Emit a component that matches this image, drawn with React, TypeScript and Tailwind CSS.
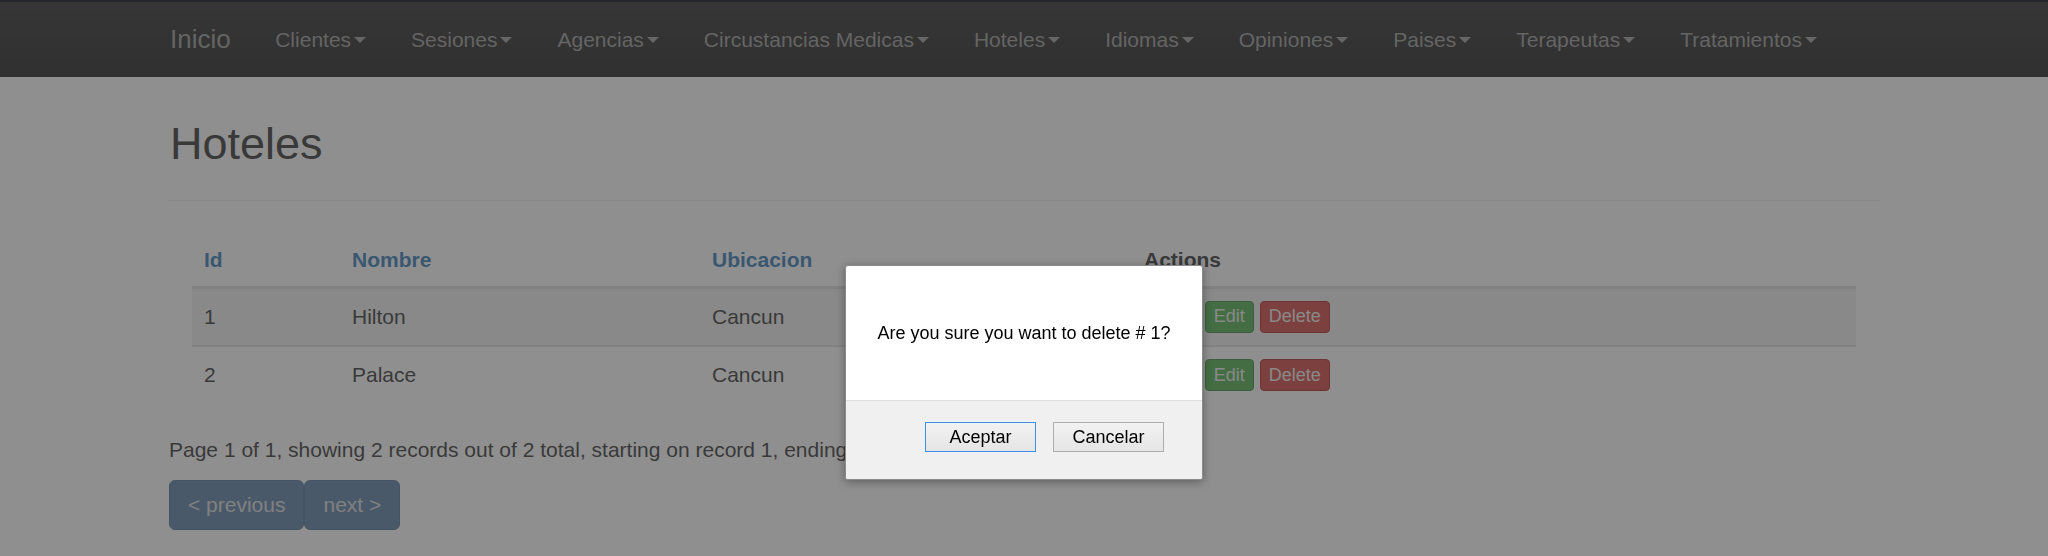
import React from 'react';

type Hotel = {
  id: number;
  nombre: string;
  ubicacion: string;
};

const menus = [
  'Clientes',
  'Sesiones',
  'Agencias',
  'Circustancias Medicas',
  'Hoteles',
  'Idiomas',
  'Opiniones',
  'Paises',
  'Terapeutas',
  'Tratamientos',
];

const hoteles: Hotel[] = [
  { id: 1, nombre: 'Hilton', ubicacion: 'Cancun' },
  { id: 2, nombre: 'Palace', ubicacion: 'Cancun' },
];

const Caret = () => (
  <span className="ml-[3px] inline-block h-0 w-0 border-x-[6px] border-t-[6px] border-x-transparent border-t-[#9d9d9d] align-middle" />
);

const Navbar = () => (
  <div className="h-[77px] border-t-2 border-[#050810] bg-gradient-to-b from-[#2c2c2c] to-[#1e1e1e]">
    <div className="mx-auto flex h-full w-[1714px] items-center pl-[3px]">
      <span className="pr-[22px] text-[26px] text-[#9a9a9a]">Inicio</span>
      {menus.map((m) => (
        <span key={m} className="flex items-center px-[22.5px] text-[21px] text-[#9a9a9a]">
          {m}
          <Caret />
        </span>
      ))}
    </div>
  </div>
);

const ConfirmDialog = () => (
  <div className="fixed inset-0 flex items-start justify-center pt-[265px]">
    <div className="flex h-[215px] w-[358px] flex-col overflow-hidden rounded-[3px] border border-[#8a8a8a] bg-white shadow-[0_2px_10px_rgba(0,0,0,0.35)] font-['Liberation_Sans',Arial,sans-serif]">
      <div className="flex h-[134px] items-center justify-center text-[18px] text-black">
        Are you sure you want to delete # 1?
      </div>
      <div className="flex flex-1 justify-end gap-[17px] border-t border-[#dfdfdf] bg-[#f0f0f0] pr-[38px] pt-[21px]">
        <button className="h-[30px] w-[111px] border border-[#3c8fe6] bg-gradient-to-b from-[#f2f2f2] to-[#e5e5e5] text-[18px] text-black">
          Aceptar
        </button>
        <button className="h-[30px] w-[111px] border border-[#adadad] bg-gradient-to-b from-[#f2f2f2] to-[#e5e5e5] text-[18px] text-black">
          Cancelar
        </button>
      </div>
    </div>
  </div>
);

const App = () => {
  return (
    <div className="min-h-[556px] bg-white font-['Liberation_Sans',Arial,sans-serif] text-[#333333]">
      <Navbar />

      <div className="mx-auto w-[1714px]">
        <h1 className="mt-[42px] border-b border-[#eeeeee] pb-[31px] pl-[3px] text-[45px] leading-[1.1]">Hoteles</h1>

        <div className="px-[25px] pt-[33px]">
          <table className="w-full border-collapse text-left text-[21px]">
            <thead>
              <tr className="h-[54px] border-b-[3px] border-[#dddddd]">
                <th className="w-[148px] px-[12px] font-bold text-[#337ab7]">Id</th>
                <th className="w-[360px] px-[12px] font-bold text-[#337ab7]">Nombre</th>
                <th className="w-[432px] px-[12px] font-bold text-[#337ab7]">Ubicacion</th>
                <th className="px-[12px] font-bold">Actions</th>
              </tr>
            </thead>
            <tbody>
              {hoteles.map((h, i) => (
                <tr
                  key={h.id}
                  className={i === 0 ? 'h-[58px] border-b-2 border-[#dddddd] bg-[#f0f0f0]' : 'h-[58px]'}
                >
                  <td className="px-[12px]">{h.id}</td>
                  <td className="px-[12px]">{h.nombre}</td>
                  <td className="px-[12px]">{h.ubicacion}</td>
                  <td className="px-[12px]">
                    <div className="flex items-center gap-[6px]">
                      <button className="h-[32px] rounded-[4px] border border-[#cccccc] bg-white px-[7px] text-[18px] text-[#333333]">
                        View
                      </button>
                      <button className="h-[32px] rounded-[4px] border border-[#3d8b3d] bg-[#4cae4c] px-[8px] text-[18px] text-[#f0f0f0]">
                        Edit
                      </button>
                      <button className="h-[32px] rounded-[4px] border border-[#ac2925] bg-[#d2433e] px-[8px] text-[18px] text-[#f0f0f0]">
                        Delete
                      </button>
                    </div>
                  </td>
                </tr>
              ))}
            </tbody>
          </table>
        </div>

        <p className="mt-[31px] pl-[2px] text-[21px] leading-[30px]">
          Page 1 of 1, showing 2 records out of 2 total, starting on record 1, ending on 2
        </p>

        <div className="mt-[15px] flex pl-[2px]">
          <span className="h-[50px] rounded-[6px] border border-[#4f739a] bg-[#5b7fa6] px-[18px] text-[21px] leading-[48px] text-[#dcdcdc]">
            &lt; previous
          </span>
          <span className="h-[50px] rounded-[6px] border border-[#4f739a] bg-[#5b7fa6] px-[18px] text-[21px] leading-[48px] text-[#dcdcdc]">
            next &gt;
          </span>
        </div>
      </div>

      <div className="fixed inset-0 bg-[#3e3e3e]/[0.58]" />
      <ConfirmDialog />
    </div>
  );
};

export default App;
